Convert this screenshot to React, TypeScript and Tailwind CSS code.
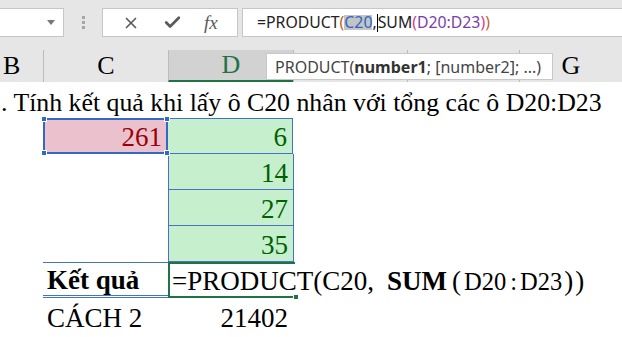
import { Check, X } from "lucide-react";

const serif = "font-['Liberation_Serif','Noto_Sans_CJK_JP',serif]";
const sans = "font-['Noto_Sans','Open_Sans',sans-serif]";

function FormulaBar() {
  return (
    <div className="flex h-[50px] items-start bg-[#e6e6e6] pt-2">
      <div className="flex h-[29px] w-[64px] items-center justify-end border border-l-0 border-[#c6c6c6] bg-white pr-[8px]">
        <svg width="8" height="5" viewBox="0 0 8 5">
          <path d="M0 0h8L4 5z" fill="#777" />
        </svg>
      </div>
      <div className="flex h-[29px] w-[38px] flex-col items-center justify-center gap-[2px]">
        <span className="h-[3px] w-[3px] bg-[#a6a6a6]" />
        <span className="h-[3px] w-[3px] bg-[#a6a6a6]" />
        <span className="h-[3px] w-[3px] bg-[#a6a6a6]" />
      </div>
      <div className="flex h-[29px] w-[136px] items-center justify-around border border-[#c6c6c6] bg-white px-2 text-[#5a5a5a]">
        <X size={18} strokeWidth={2.2} />
        <Check size={19} strokeWidth={3.4} />
        <span className={`${serif} text-[19px] italic`}>fx</span>
      </div>
      <div
        className={`${sans} ml-1 flex h-[29px] flex-1 items-center whitespace-nowrap border border-r-0 border-[#c6c6c6] bg-white pl-[14px] text-[15.8px] text-[#222]`}
      >
        <span>=PRODUCT</span>
        <span className="text-[#c0651c]">(</span>
        <span className="bg-[#c4c4c4] text-[#2f64c7]">C20</span>
        <span>,</span>
        <span className="h-[18px] w-px bg-black" />
        <span>SUM</span>
        <span className="text-[#d23e93]">(</span>
        <span className="text-[#7a3ea6]">D20:D23</span>
        <span className="text-[#d23e93]">)</span>
        <span className="text-[#c0651c]">)</span>
      </div>
    </div>
  );
}

function ColumnHeaders() {
  return (
    <div className={`${serif} relative flex h-[32px] bg-[#e6e6e6] text-[26px] text-black`}>
      <div className="flex w-[43px] items-center pl-[3px]">B</div>
      <div className="flex w-[125px] items-center justify-center border-l border-[#bcbcbc]">C</div>
      <div className="flex w-[125px] items-center justify-center border-l border-b-2 border-[#bcbcbc] border-b-[#217346] bg-[#d2d2d2] text-[#217346]">
        D
      </div>
      <div className="w-[114px] border-l border-[#bcbcbc]" />
      <div className="w-[112px] border-l border-[#bcbcbc]" />
      <div className="flex flex-1 items-center justify-center border-l border-[#bcbcbc]">G</div>
      <div
        className={`${sans} absolute left-[266px] top-[3px] flex h-[27px] w-[287px] items-center whitespace-nowrap border border-[#c8c8c8] bg-white pl-[8px] text-[16px] text-[#444]`}
      >
        PRODUCT(<b className="text-[#333]">number1</b>; [number2]; ...)
      </div>
    </div>
  );
}

function Handle({ className }: { className: string }) {
  return <span className={`absolute h-[6px] w-[6px] border border-white bg-[#2f6ac4] ${className}`} />;
}

const numbers = [14, 27, 35];

export default function App() {
  return (
    <div className={`${serif} h-[337px] w-[622px] overflow-hidden bg-white text-[27px] leading-none text-black`}>
      <FormulaBar />
      <ColumnHeaders />

      <div className="flex h-[36px] items-end whitespace-nowrap pb-[2px] pl-[1px] text-[25.8px]">
        . Tính kết quả khi lấy ô C20 nhân với tổng các ô D20:D23
      </div>

      <div className="flex h-[36px]">
        <div className="w-[43px]" />
        <div className="relative flex w-[125px] items-end justify-end border-2 border-[#3468c6] bg-[#eac1cc] pb-[1px] pr-[4px] text-[#9c0006]">
          261
          <Handle className="-left-[4px] -top-[4px]" />
          <Handle className="-right-[4px] -top-[4px]" />
          <Handle className="-bottom-[4px] -left-[4px]" />
          <Handle className="-bottom-[4px] -right-[4px]" />
        </div>
        <div className="flex w-[125px] items-end justify-end border-y border-r border-[#4472c4] bg-[#c6efce] pb-[2px] pr-[5px] text-[#006100]">
          6
        </div>
      </div>

      {numbers.map((n) => (
        <div key={n} className="flex h-[36px]">
          <div className="w-[168px]" />
          <div className="flex w-[126px] items-end justify-end border-x border-b border-[#4472c4] bg-[#c6efce] pb-[2px] pr-[5px] text-[#006100]">
            {n}
          </div>
        </div>
      ))}

      <div className="flex h-[36px]">
        <div className="w-[43px]" />
        <div className="flex w-[125px] items-end border-t border-b-[3px] border-double border-[#4472c4] pb-[1px] pl-[4px] font-bold">
          Kết quả
        </div>
        <div className="relative flex w-[127px] items-end whitespace-nowrap border-y-2 border-l-2 border-[#217346] pb-[1px] pl-[2px]">
          <span className="flex items-baseline">
            <span>=PRODUCT(C20,</span>
            <b className="ml-[13px]">SUM</b>
            <span className="ml-[5px]">(</span>
            <span className="ml-[3px] text-[24.5px]">D20</span>
            <span className="ml-[4px] text-[24.5px]">:</span>
            <span className="ml-[3px] text-[24.5px]">D23</span>
            <span className="ml-[2px]">)</span>
            <span className="ml-[2px]">)</span>
          </span>
          <span className="absolute -bottom-[4px] -right-[4px] h-[6px] w-[6px] border border-white bg-[#217346]" />
        </div>
      </div>

      <div className="flex h-[36px]">
        <div className="w-[43px]" />
        <div className="flex w-[125px] items-end pb-[2px] pl-[4px]">CÁCH 2</div>
        <div className="flex w-[125px] items-end justify-end pb-[2px] pr-[5px]">21402</div>
      </div>
    </div>
  );
}
